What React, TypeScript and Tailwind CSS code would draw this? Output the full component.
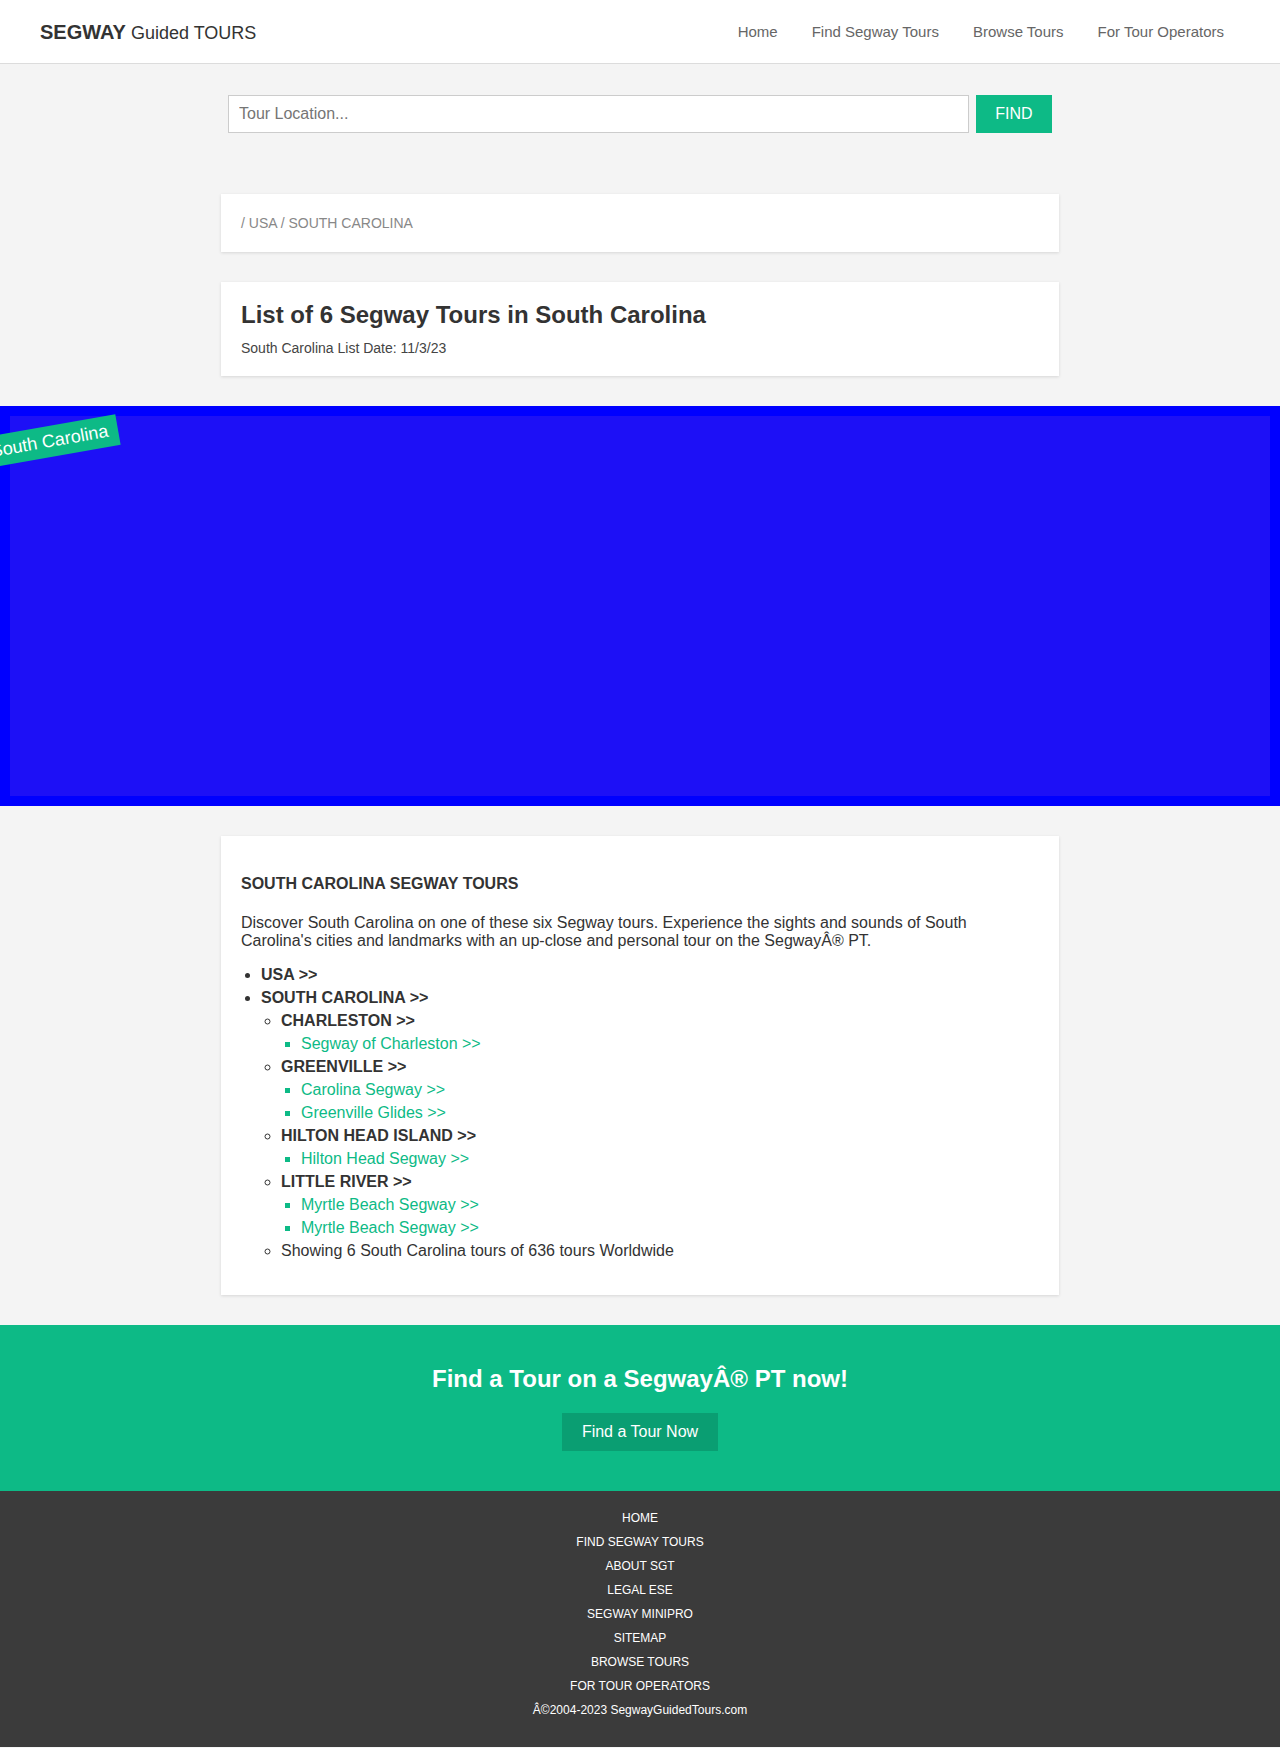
import React from 'react'

const NAV = ['Home', 'Find Segway Tours', 'Browse Tours', 'For Tour Operators']

const FOOTER_LINKS = [
  'HOME',
  'FIND SEGWAY TOURS',
  'ABOUT SGT',
  'LEGAL ESE',
  'SEGWAY MINIPRO',
  'SITEMAP',
  'BROWSE TOURS',
  'FOR TOUR OPERATORS',
]

interface City {
  name: string
  tours: string[]
}

const CITIES: City[] = [
  { name: 'CHARLESTON', tours: ['Segway of Charleston'] },
  { name: 'GREENVILLE', tours: ['Carolina Segway', 'Greenville Glides'] },
  { name: 'HILTON HEAD ISLAND', tours: ['Hilton Head Segway'] },
  { name: 'LITTLE RIVER', tours: ['Myrtle Beach Segway', 'Myrtle Beach Segway'] },
]

function Card({ children, className }: { children: React.ReactNode; className?: string }) {
  return (
    <div className={'w-[838px] mx-auto bg-white shadow-[0_1px_3px_rgba(0,0,0,0.12)] px-5 ' + (className ?? '')}>
      {children}
    </div>
  )
}

export default function App() {
  return (
    <div className="min-h-[1748px] bg-[#f4f4f4] text-[#333] font-['Liberation_Sans',Arial,sans-serif]">
      {/* Header */}
      <header className="h-[64px] bg-white border-b border-[#dcdcdc] flex items-center justify-between pl-10 pr-[39px]">
        <a className="text-[#333] leading-none">
          <span className="text-[20px] font-bold">SEGWAY</span>
          <span className="text-[18px]"> Guided TOURS</span>
        </a>
        <nav className="flex pt-[2px]">
          {NAV.map(item => (
            <a key={item} className="px-[17px] text-[15px] text-[#666]">
              {item}
            </a>
          ))}
        </nav>
      </header>

      {/* Search */}
      <div className="pt-[31px] flex justify-center gap-[7px]">
        <input
          placeholder="Tour Location..."
          className="w-[741px] h-[38px] bg-white border border-[#cccccc] px-[10px] text-[16px] placeholder:text-[#757575] outline-none"
        />
        <button className="w-[76px] h-[38px] bg-[#0dba86] text-white text-[16px]">FIND</button>
      </div>

      {/* Breadcrumb */}
      <Card className="mt-[61px] py-[19px]">
        <div className="text-[14px] leading-5 text-[#888]">/ USA / SOUTH CAROLINA</div>
      </Card>

      {/* Title */}
      <Card className="mt-[30px] pt-5 pb-[18px]">
        <h1 className="text-[24px] font-bold leading-[26px]">List of 6 Segway Tours in South Carolina</h1>
        <p className="mt-[10px] text-[14px] leading-5 text-[#444]">South Carolina List Date: 11/3/23</p>
      </Card>

      {/* Map */}
      <section className="relative mt-[30px] h-[400px] bg-[#0000ff] p-[10px] overflow-hidden">
        <div className="h-full bg-[#1d10f6]" />
        <div className="absolute left-[-20px] top-[20px] w-[139px] h-[31px] bg-[#0dba86] text-white text-[18px] leading-[31px] text-center -rotate-10">
          South Carolina
        </div>
      </section>

      {/* Listing */}
      <Card className="mt-[30px] pt-[39px] pb-[33px]">
        <h2 className="text-[16px] font-bold leading-[18px]">SOUTH CAROLINA SEGWAY TOURS</h2>
        <p className="mt-[21px] text-[16px] leading-[18px] pr-10">
          Discover South Carolina on one of these six Segway tours. Experience the sights and sounds of South
          Carolina's cities and landmarks with an up-close and personal tour on the SegwayÂ® PT.
        </p>
        <ul className="mt-[13px] pl-5 list-disc text-[16px] leading-[23px]">
          <li className="font-bold">USA &gt;&gt;</li>
          <li>
            <span className="font-bold">SOUTH CAROLINA &gt;&gt;</span>
            <ul className="pl-5 list-[circle]">
              {CITIES.map(city => (
                <li key={city.name}>
                  <span className="font-bold">{city.name} &gt;&gt;</span>
                  <ul className="pl-5 list-[square]">
                    {city.tours.map((tour, i) => (
                      <li key={i} className="text-[#0dba86]">
                        <a>{tour} &gt;&gt;</a>
                      </li>
                    ))}
                  </ul>
                </li>
              ))}
              <li>Showing 6 South Carolina tours of 636 tours Worldwide</li>
            </ul>
          </li>
        </ul>
      </Card>

      {/* Call to action */}
      <section className="mt-[30px] h-[166px] bg-[#0dba86] flex flex-col items-center pt-[40px]">
        <h2 className="text-[24px] font-bold text-white leading-[28px]">Find a Tour on a SegwayÂ® PT now!</h2>
        <a className="mt-[20px] h-[38px] px-5 bg-[#0a9e72] text-white text-[16px] leading-[38px]">Find a Tour Now</a>
      </section>

      {/* Footer */}
      <footer className="bg-[#3b3b3b] pt-[15px] pb-[25px] flex flex-col items-center text-white text-[12px] leading-6">
        {FOOTER_LINKS.map(link => (
          <a key={link}>{link}</a>
        ))}
        <p>Â©2004-2023 SegwayGuidedTours.com</p>
      </footer>
    </div>
  )
}
